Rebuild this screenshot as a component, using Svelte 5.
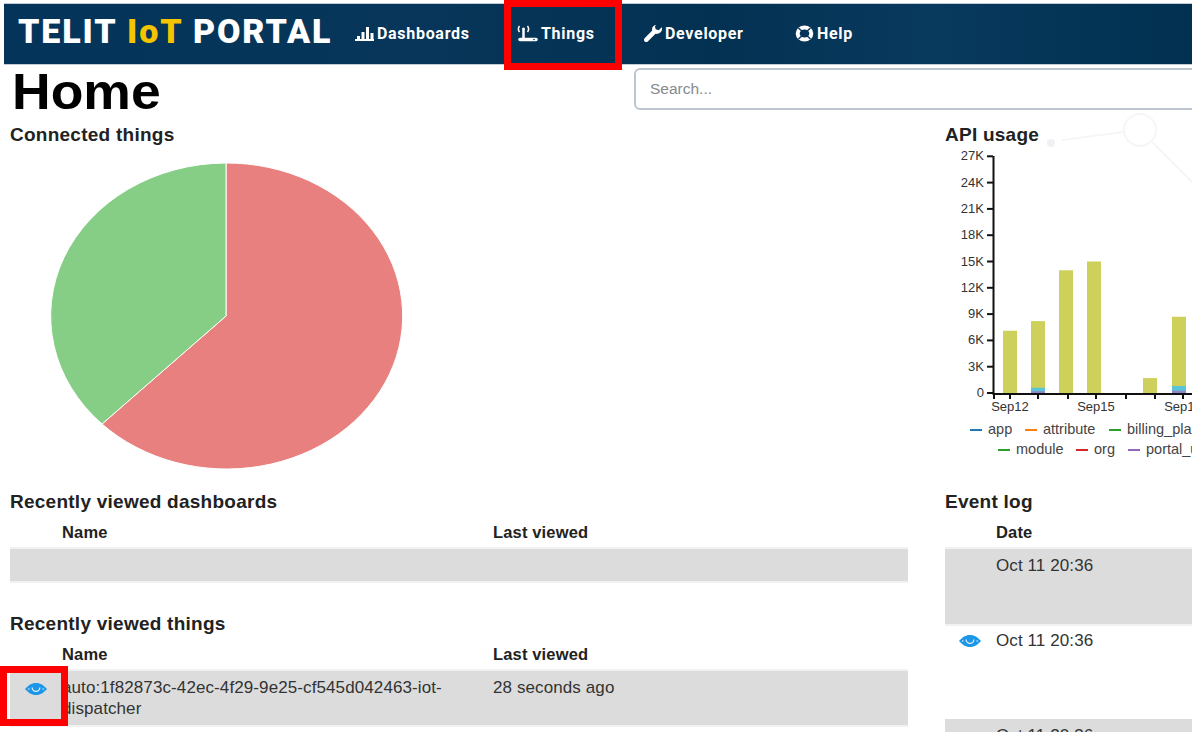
<script lang="ts">
	const nav = [
		{ label: 'Dashboards', icon: 'bars' },
		{ label: 'Things', icon: 'router' },
		{ label: 'Developer', icon: 'wrench' },
		{ label: 'Help', icon: 'help' }
	];

	// stacked bars of the API usage chart: thousands of calls
	const bars = [
		{ x: 1003, top: 7.1, low: 0 },
		{ x: 1031, top: 8.2, low: 0.6 },
		{ x: 1059, top: 14, low: 0 },
		{ x: 1087, top: 15, low: 0 },
		{ x: 1143, top: 1.7, low: 0.1 },
		{ x: 1172, top: 8.7, low: 0.8 }
	];
	const chartBase = 393 - 150;
	const y = (k: number) => chartBase - (k / 3) * 26.3;
	const yTicks = [0, 3, 6, 9, 12, 15, 18, 21, 24, 27];
	const xTicks = [994, 1010, 1038, 1068, 1096, 1126, 1155, 1183];
	const xLabels = [
		{ x: 1010, text: 'Sep12' },
		{ x: 1096, text: 'Sep15' },
		{ x: 1183, text: 'Sep18' }
	];
	const legend = [
		{ x: 970, y: 284, color: '#1f77b4', text: 'app' },
		{ x: 1025, y: 284, color: '#ff7f0e', text: 'attribute' },
		{ x: 1109, y: 284, color: '#2ca02c', text: 'billing_plan' },
		{ x: 998, y: 304, color: '#2ca02c', text: 'module' },
		{ x: 1076, y: 304, color: '#d62728', text: 'org' },
		{ x: 1128, y: 304, color: '#9467bd', text: 'portal_user' }
	];
</script>

{#snippet eye()}
	<svg class="eye" viewBox="0 0 22 12" aria-hidden="true">
		<path d="M0 6C4 1.5 7.5 0 11 0s7 1.500 11 6c-4 4.500-7.500 6-11 6S4 10.500 0 6Z" fill="#1c96e6" />
		<path d="M6.500 4.500a4.500 4.500 0 0 0 9 0h-1.300a3.200 3.200 0 0 1-6.400 0Z" fill="#dff0fb" />
		<circle cx="3.800" cy="6" r=".8" fill="#dff0fb" />
		<circle cx="18.200" cy="6" r=".8" fill="#dff0fb" />
	</svg>
{/snippet}

<div class="page">
	<header class="topbar">
		<div class="logo">TELIT <span>IoT</span> PORTAL</div>
		<nav>
			{#each nav as item}
				<span class="nav-item {item.icon}">
					{#if item.icon === 'bars'}
						<svg width="19" height="15" viewBox="0 0 19 15" fill="#fff">
							<path d="M0 13h19v2H0zM2 10h3v3H2zM6.500 6h3v7h-3zM11 1h3v12h-3zM15.500 7h3v6h-3z" />
						</svg>
					{:else if item.icon === 'router'}
						<svg width="21" height="18" viewBox="0 0 21 18" fill="none" stroke="#fff" stroke-width="1.500">
							<path d="M6.500 5v8" stroke-width="2.500" />
							<path d="M3 14.500h16" stroke-width="3.500" stroke-linecap="round" />
							<path d="M2.500 1C1 3 1 5 2.500 7M10.500 1c1.500 2 1.500 4 0 6" />
							<circle cx="6.500" cy="4" r="1.500" fill="#fff" stroke="none" />
							<circle cx="17" cy="14.500" r=".8" fill="#0b3356" stroke="none" />
						</svg>
					{:else if item.icon === 'wrench'}
						<svg width="18" height="18" viewBox="0 0 18 18" fill="#fff">
							<path d="M12.500 0c-3 0-5 2.500-4.300 5.500L.6 13.200c-.8.800-.8 2.300 0 3.200.9.900 2.400.900 3.200 0l7.700-7.600c3 .7 6.500-1.300 6.500-5 0-.6-.1-1-.3-1.500l-3 3-3-1 -.8-2.800 3-3C13.500.1 13 0 12.500 0Z" />
						</svg>
					{:else}
						<svg width="19" height="17" viewBox="0 0 19 17" fill="none">
							<ellipse cx="9.500" cy="8.500" rx="6.800" ry="6" stroke="#fff" stroke-width="4" />
							<path d="M3.500 3 7 6.300M15.500 3 12 6.300M3.500 14 7 10.700M15.500 14 12 10.700" stroke="#0b3356" stroke-width="1.400" />
						</svg>
					{/if}
					{item.label}
				</span>
			{/each}
		</nav>
	</header>

	<div class="title-row">
		<h1>Home</h1>
		<input class="search" placeholder="Search..." />
	</div>

	<svg class="watermark" width="100" height="120" viewBox="0 0 100 120" fill="none" stroke="#f5f6f7" stroke-width="2">
		<circle cx="48" cy="16" r="16" />
		<path d="M-30 26 L32 18M60 28 L100 68" />
		<circle cx="-41" cy="29" r="4" fill="#eff0f3" stroke="none" />
	</svg>

	<div class="columns">
		<section class="left">
			<div class="panel connected">
				<h2>Connected things</h2>
				<svg class="pie" width="356" height="310" viewBox="0 0 356 310">
					<path d="M177 154 L177 1 A176 153 0 1 1 53 262 Z" fill="#e88080" stroke="#fff" />
					<path d="M177 154 L53 262 A176 153 0 0 1 177 1 Z" fill="#86ce86" stroke="#fff" />
				</svg>
			</div>

			<div class="panel dashboards">
				<h2>Recently viewed dashboards</h2>
				<div class="thead left-grid">
					<span></span><span>Name</span><span>Last viewed</span>
				</div>
				<div class="row left-grid empty"></div>
			</div>

			<div class="panel things">
				<h2>Recently viewed things</h2>
				<div class="thead left-grid">
					<span></span><span>Name</span><span>Last viewed</span>
				</div>
				<div class="row left-grid">
					<span class="eye-cell">{@render eye()}</span>
					<span class="name">auto:1f82873c-42ec-4f29-9e25-cf545d042463-iot-dispatcher</span>
					<span>28 seconds ago</span>
				</div>
			</div>
		</section>

		<section class="right">
			<div class="panel connected">
				<h2>API usage</h2>
				<svg class="chart" width="247" height="325" viewBox="945 150 247 325">
					<g transform="translate(0 150)">
						<path d="M993.500 6V{chartBase + 1}H1192" fill="none" stroke="#111" stroke-width="2" />
						{#each yTicks as t}
							<path d="M987 {y(t)}H993" stroke="#111" stroke-width="2" />
							<text class="tick" x="984" y={y(t) + 4} text-anchor="end">{t === 0 ? '0' : `${t}K`}</text>
						{/each}
						{#each xTicks as t}
							<path d="M{t} {chartBase}v6" stroke="#111" stroke-width="2" />
						{/each}
						{#each xLabels as l}
							<text class="tick" x={l.x} y={chartBase + 18} text-anchor="middle">{l.text}</text>
						{/each}
						{#each bars as b}
							<rect x={b.x} y={y(b.top)} width="14" height={y(0) - y(b.top)} fill="#cdd05a" />
							{#if b.low > 0.3}
								<rect x={b.x} y={y(b.low)} width="14" height={y(0) - y(b.low)} fill="#5bc4d8" />
								<rect x={b.x} y={y(b.low / 3)} width="14" height={y(0) - y(b.low / 3)} fill="#8f86c4" />
							{/if}
						{/each}
						{#each legend as l}
							<path d="M{l.x} {l.y - 4}h12" stroke={l.color} stroke-width="2" />
							<text class="legend" x={l.x + 18} y={l.y}>{l.text}</text>
						{/each}
					</g>
				</svg>
			</div>

			<div class="panel events">
				<h2>Event log</h2>
				<div class="thead right-grid"><span></span><span>Date</span></div>
				<div class="row right-grid tall"><span></span><span>Oct 11 20:36</span></div>
				<div class="row right-grid tall plain">
					<span class="eye-cell">{@render eye()}</span>
					<span>Oct 11 20:36</span>
				</div>
				<div class="row right-grid"><span></span><span>Oct 11 20:36</span></div>
			</div>
		</section>
	</div>

	<div class="mark mark-things"></div>
	<div class="mark mark-eye"></div>
</div>

<style>
	:global(body) {
		background: #fff;
	}

	.page {
		position: relative;
		width: 1192px;
		height: 732px;
		overflow: hidden;
		font-family: 'Liberation Sans', Arial, sans-serif;
		color: #222;
		background: #fff;
	}

	.topbar {
		display: flex;
		align-items: center;
		height: 60px;
		margin: 4px 0 0 4px;
		background: linear-gradient(90deg, #05345a 0%, #07365a 35%, #033152 60%, #083a5e 78%, #013050 100%);
		color: #fff;
		font-family: Roboto, sans-serif;
		font-weight: 700;
		box-shadow: 0 1px 0 #c3ccd5, 0 -1px 0 #c3ccd5;
	}

	.logo {
		width: 351px;
		padding: 0 0 7px 14px;
		font-size: 34px;
		font-weight: 900;
		letter-spacing: 1.9px;
		white-space: nowrap;
		box-sizing: border-box;
	}

	.logo span {
		color: #f5c400;
	}

	nav {
		display: flex;
		align-items: center;
		padding-bottom: 1px;
		font-size: 16px;
		letter-spacing: 0.7px;
	}

	.nav-item {
		display: flex;
		align-items: center;
		gap: 3px;
		white-space: nowrap;
	}

	.bars { width: 162px; }
	.router { width: 127px; }
	.wrench { width: 151px; }

	.title-row {
		display: flex;
		align-items: center;
		justify-content: space-between;
		height: 47px;
		margin-bottom: 13px;
		padding-left: 12px;
	}

	h1 {
		margin: 10px 0 0;
		font-size: 50px;
		line-height: 57px;
		color: #000;
		transform: scaleX(1.07);
		transform-origin: left;
	}

	.search {
		width: 600px;
		height: 42px;
		margin: 3px -42px 0 0;
		padding: 0 14px;
		border: 2px solid #bdc6ce;
		border-radius: 6px;
		box-sizing: border-box;
		font-family: inherit;
		font-size: 15.500px;
		background: #fff;
	}

	.search::placeholder {
		color: #858a8f;
		opacity: 1;
	}

	.watermark {
		position: absolute;
		left: 1092px;
		top: 114px;
		overflow: visible;
	}

	.columns {
		position: relative;
		display: grid;
		grid-template-columns: 898px 247px;
		gap: 37px;
		margin-left: 10px;
	}

	.panel h2 {
		margin: 0;
		font-size: 19px;
		line-height: 22px;
		letter-spacing: 0.25px;
		color: #222;
	}

	.connected {
		height: 367px;
	}

	.pie {
		display: block;
		margin: 16px 0 0 39px;
	}

	.chart {
		display: block;
		overflow: hidden;
		margin-top: 4px;
	}

	.tick {
		font-size: 13px;
		fill: #333;
	}

	.legend {
		font-size: 14.500px;
		fill: #444;
	}

	.dashboards {
		height: 122px;
	}

	.thead {
		align-items: center;
		font-size: 16.500px;
		font-weight: 700;
		letter-spacing: 0.15px;
		color: #222;
		line-height: 20px;
	}

	.left-grid {
		display: grid;
		grid-template-columns: 52px 431px 1fr;
	}

	.right-grid {
		display: grid;
		grid-template-columns: 51px 1fr;
	}

	.thead.left-grid, .thead.right-grid {
		border-bottom: 2px solid #f1f1f1;
		height: 36px;
		box-sizing: border-box;
		padding-top: 4px;
	}

	.row {
		background: #dcdcdc;
		font-size: 17px;
		letter-spacing: 0.1px;
		line-height: 21px;
		padding-top: 6px;
		box-sizing: border-box;
		color: #333;
		border-bottom: 2px solid #f1f1f1;
	}

	.empty {
		height: 34px;
	}

	.things .row {
		height: 56px;
	}

	.name {
		padding-right: 20px;
	}

	.eye-cell {
		display: flex;
		justify-content: center;
		padding: 6px 1px 0 0;
	}

	.eye {
		width: 22px;
		height: 12px;
	}

	.tall {
		height: 77px;
	}

	.plain {
		height: 93px;
		padding-top: 4px;
		background: #fff;
		border-bottom: 0;
	}

	.plain .eye-cell {
		padding-top: 5px;
	}

	.mark {
		position: absolute;
		border: 7px solid #f00;
		box-sizing: border-box;
	}

	.mark-things {
		left: 504px;
		top: 0;
		width: 118px;
		height: 70px;
	}

	.mark-eye {
		left: 0;
		top: 666px;
		width: 68px;
		height: 60px;
	}
</style>
